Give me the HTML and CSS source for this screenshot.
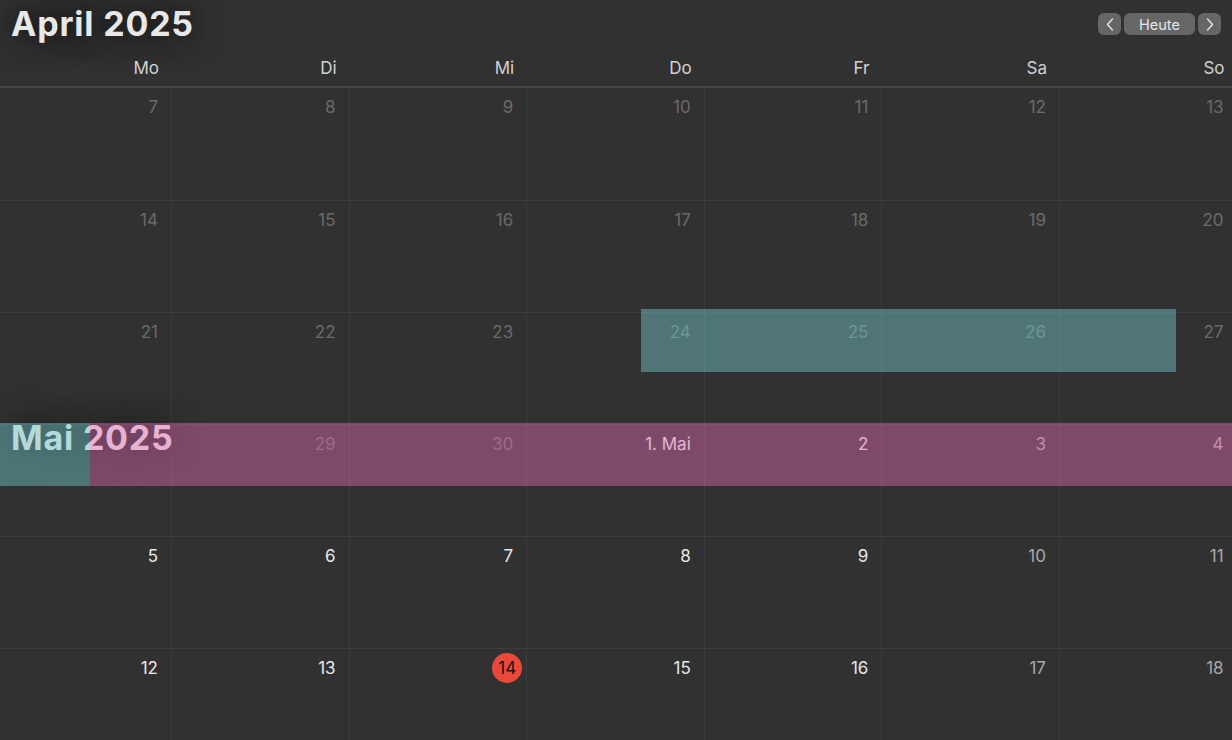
FILE: index.html
```html
<!DOCTYPE html>
<html lang="de">
<head>
  <meta charset="UTF-8">
  <meta name="viewport" content="width=device-width, initial-scale=1.0">
  <title>Kalender – April 2025</title>
  <link rel="stylesheet" href="styles.css">
</head>
<body>
  <div class="calendar">
    <header class="toolbar">
      <h1 class="month-title">April 2025</h1>
      <div class="nav">
        <button class="nav-btn" aria-label="Zurück">
          <svg width="8" height="13" viewBox="0 0 8 13"><path d="M6.5 1 1.5 6.5l5 5.5" fill="none" stroke="currentColor" stroke-width="1.4" stroke-linecap="round" stroke-linejoin="round"/></svg>
        </button>
        <button class="nav-btn today-btn">Heute</button>
        <button class="nav-btn" aria-label="Weiter">
          <svg width="8" height="13" viewBox="0 0 8 13"><path d="M1.5 1l5 5.5-5 5.5" fill="none" stroke="currentColor" stroke-width="1.4" stroke-linecap="round" stroke-linejoin="round"/></svg>
        </button>
      </div>
    </header>

    <div class="weekdays">
      <div>Mo</div><div>Di</div><div>Mi</div><div>Do</div><div>Fr</div><div>Sa</div><div>So</div>
    </div>

    <div class="weeks">
      <div class="cell other"><span>7</span></div>
      <div class="cell other"><span>8</span></div>
      <div class="cell other"><span>9</span></div>
      <div class="cell other"><span>10</span></div>
      <div class="cell other"><span>11</span></div>
      <div class="cell other"><span>12</span></div>
      <div class="cell other"><span>13</span></div>

      <div class="cell other"><span>14</span></div>
      <div class="cell other"><span>15</span></div>
      <div class="cell other"><span>16</span></div>
      <div class="cell other"><span>17</span></div>
      <div class="cell other"><span>18</span></div>
      <div class="cell other"><span>19</span></div>
      <div class="cell other"><span>20</span></div>

      <div class="cell other"><span>21</span></div>
      <div class="cell other"><span>22</span></div>
      <div class="cell other"><span>23</span></div>
      <div class="cell other"><span>24</span></div>
      <div class="cell other"><span>25</span></div>
      <div class="cell other"><span>26</span></div>
      <div class="cell other"><span>27</span></div>

      <div class="cell other"></div>
      <div class="cell other"><span>29</span></div>
      <div class="cell other"><span>30</span></div>
      <div class="cell"><span>1. Mai</span></div>
      <div class="cell"><span>2</span></div>
      <div class="cell weekend"><span>3</span></div>
      <div class="cell weekend"><span>4</span></div>

      <div class="cell"><span>5</span></div>
      <div class="cell"><span>6</span></div>
      <div class="cell"><span>7</span></div>
      <div class="cell"><span>8</span></div>
      <div class="cell"><span>9</span></div>
      <div class="cell weekend"><span>10</span></div>
      <div class="cell weekend"><span>11</span></div>

      <div class="cell"><span>12</span></div>
      <div class="cell"><span>13</span></div>
      <div class="cell"><span class="today">14</span></div>
      <div class="cell"><span>15</span></div>
      <div class="cell"><span>16</span></div>
      <div class="cell weekend"><span>17</span></div>
      <div class="cell weekend"><span>18</span></div>

      <div class="month-label">Mai 2025</div>

      <div class="event teal event-trip"></div>
      <div class="event teal event-carry"></div>
      <div class="event pink event-week"></div>
    </div>
  </div>
</body>
</html>
```

FILE: styles.css
```css
html, body {
  margin: 0;
  padding: 0;
  height: 100%;
  overflow: hidden;
  background: #323131;
  font-family: Inter, "Noto Sans", sans-serif;
  color: #e6e6e6;
}

.calendar {
  display: flex;
  flex-direction: column;
}

.toolbar {
  display: flex;
  justify-content: space-between;
  align-items: flex-start;
  height: 50px;
  padding: 0 11px;
}

.month-title {
  margin: 0;
  padding-top: 4px;
  font-size: 34px;
  line-height: 40px;
  font-weight: 700;
  letter-spacing: 0.8px;
  color: #e8e8e8;
  text-shadow: 0 0 22px rgba(0 0 0 / .55), 0 0 40px rgba(0 0 0 / .35);
}

.nav {
  display: flex;
  gap: 3px;
  margin-top: 13px;
}

.nav-btn {
  display: flex;
  align-items: center;
  justify-content: center;
  width: 23px;
  height: 22px;
  padding: 0;
  border: none;
  border-radius: 6px;
  background: #676666;
  color: #e6e6e6;
  font-family: inherit;
  font-size: 14.5px;
}

.today-btn {
  width: 71px;
}

.weekdays {
  display: grid;
  grid-template-columns: repeat(7, 177.6px);
  margin-left: -6.6px;
  height: 36px;
  border-bottom: 2px solid #484747;
}

.weekdays div {
  padding: 8px 12px 0 0;
  text-align: right;
  font-size: 17px;
  line-height: 20px;
  color: #d2d2d2;
}

.weeks {
  position: relative;
  display: grid;
  grid-template-columns: repeat(7, 177.6px);
  grid-auto-rows: 112px;
  margin-left: -6.6px;
}

.cell {
  box-sizing: border-box;
  padding: 9px 13px 0 0;
  border-left: 1px solid #3d3c3c;
  border-top: 1px solid #3d3c3c;
  text-align: right;
  font-size: 17px;
  line-height: 20px;
  color: #e8e8e8;
}

.weeks .cell:nth-child(-n+7) {
  border-top: none;
}

.cell.other {
  color: #6b6a6a;
}

.cell.weekend {
  color: #a8a8a8;
}

.cell .today {
  display: inline-flex;
  align-items: center;
  justify-content: center;
  width: 30px;
  height: 30px;
  margin: -6px -9px 0 0;
  border-radius: 50%;
  background: #e9483b;
  color: #141414;
}

.month-label {
  position: absolute;
  left: 17.6px;
  top: 330px;
  font-size: 34px;
  line-height: 40px;
  font-weight: 700;
  letter-spacing: 0.8px;
  color: #e8e8e8;
  text-shadow: 0 0 22px rgba(0 0 0 / .55), 0 0 40px rgba(0 0 0 / .35);
}

.event {
  position: absolute;
  height: 63px;
}

.teal {
  background: rgba(115 201 205 / .45);
}

.pink {
  background: rgba(228 108 180 / .43);
}

.event-trip {
  left: 647.6px;
  top: 221px;
  width: 535px;
}

.event-carry {
  left: 0;
  top: 335px;
  width: 96.6px;
}

.event-week {
  left: 96.6px;
  right: 0;
  top: 335px;
}
```
